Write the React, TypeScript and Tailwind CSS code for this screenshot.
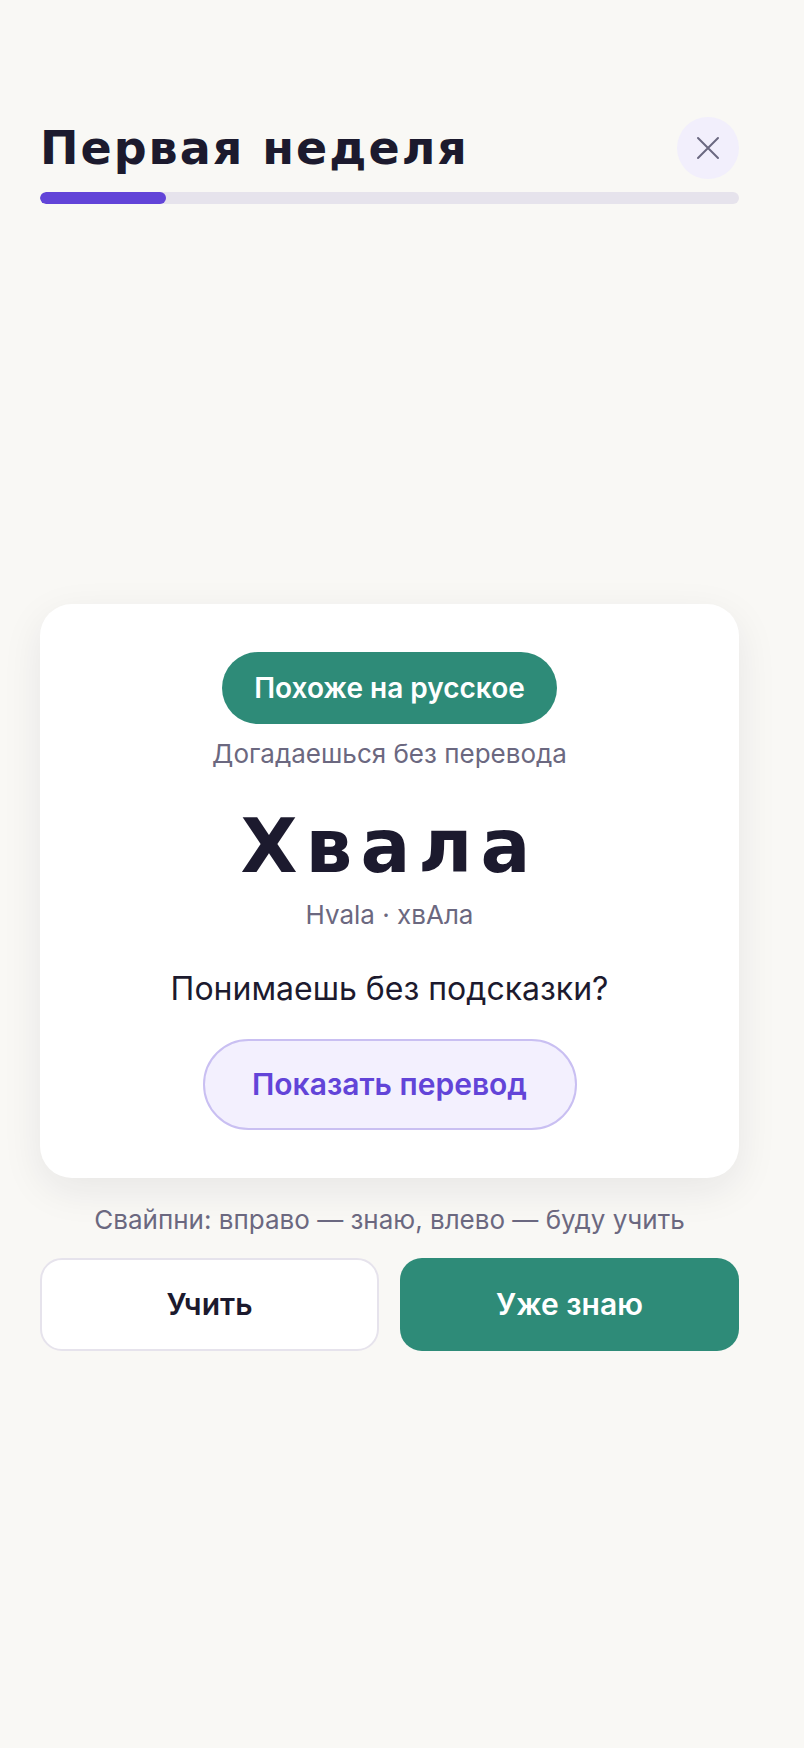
import React from "react";

export default function App() {
  const inter = { fontFamily: "Inter, 'Noto Sans', sans-serif" };
  const wide = { fontFamily: "'DejaVu Sans', 'Noto Sans', sans-serif" };
  return (
    <div className="min-h-[1748px] w-full bg-[#f9f8f5]" style={inter}>
      <div className="ml-[40px] w-[699px] pt-[117px]">
        <div className="flex h-[62px] items-center justify-between">
          <h1 className="text-[46px] font-bold leading-none tracking-[2px] text-[#1c1a2e]" style={wide}>
            Первая неделя
          </h1>
          <button className="flex h-[62px] w-[62px] items-center justify-center rounded-full bg-[#f2effc]">
            <svg width="24" height="24" viewBox="0 0 24 24" fill="none" stroke="#6b6880" strokeWidth="2" strokeLinecap="round">
              <path d="M2 2 L22 22 M22 2 L2 22" />
            </svg>
          </button>
        </div>
        <div className="mt-[13px] h-[12px] w-full overflow-hidden rounded-full bg-[#e6e3ec]">
          <div className="h-full w-[18%] rounded-full bg-[#6244d8]" />
        </div>

        <div className="mt-[400px] flex h-[574px] flex-col items-center rounded-[32px] bg-white pt-[48px] shadow-[0_12px_40px_rgba(30,25,50,0.08)]">
          <div className="flex h-[72px] items-center rounded-full bg-[#2e8b78] px-8 text-[28px] font-semibold text-white">
            Похоже на русское
          </div>
          <div className="mt-[13px] text-[26px] leading-[34px] text-[#6b6880]">Догадаешься без перевода</div>
          <div className="mt-[38px] text-[74px] font-bold leading-none tracking-[8px] text-[#1c1a2e]" style={wide}>
            Хвала
          </div>
          <div className="mt-[15px] text-[26px] leading-[34px] text-[#6b6880]">Hvala · хвАла</div>
          <div className="mt-[37px] text-[32px] leading-[40px] text-[#1c1a2e]">Понимаешь без подсказки?</div>
          <button className="mt-[30px] flex h-[91px] w-[374px] items-center justify-center rounded-full border-2 border-[#c9bff2] bg-[#f3f0fe] text-[30px] font-semibold text-[#6244d8]">
            Показать перевод
          </button>
        </div>

        <div className="mt-[25px] text-center text-[26px] leading-[34px] text-[#6b6880]">
          Свайпни: вправо — знаю, влево — буду учить
        </div>
        <div className="mt-[21px] grid grid-cols-2 gap-[21px]">
          <button className="flex h-[93px] items-center justify-center rounded-[22px] border-2 border-[#e6e3ec] bg-white text-[30px] font-semibold text-[#1c1a2e]">
            Учить
          </button>
          <button className="flex h-[93px] items-center justify-center rounded-[22px] bg-[#2e8b78] text-[30px] font-semibold text-white">
            Уже знаю
          </button>
        </div>
      </div>
    </div>
  );
}
